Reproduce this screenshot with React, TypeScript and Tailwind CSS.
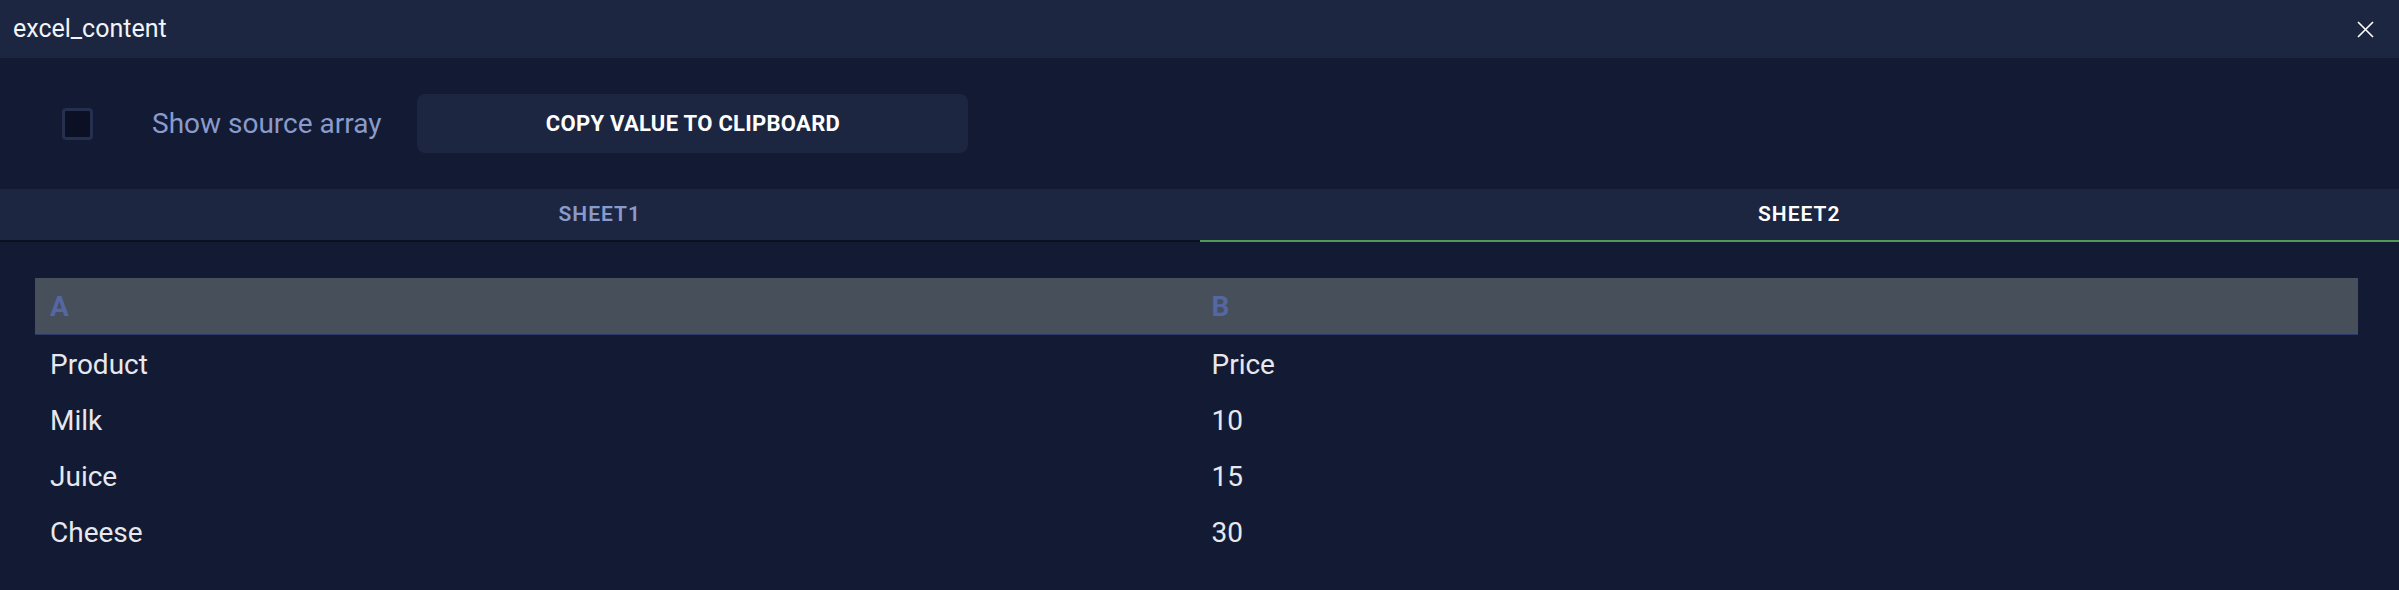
import { useState } from 'react';

const rows = [
  ['Product', 'Price'],
  ['Milk', '10'],
  ['Juice', '15'],
  ['Cheese', '30'],
];

export default function App() {
  const [showSource, setShowSource] = useState(false);
  const [tab, setTab] = useState(1);

  return (
    <div className="w-[2399px] h-[590px] bg-[#131a33] text-white flex flex-col overflow-hidden font-['Roboto','Liberation_Sans',sans-serif]">
      {/* title bar */}
      <div className="h-[58px] shrink-0 bg-[#1c2640] flex items-center justify-between pl-[13px] pr-[24px]">
        <span className="text-[25px] text-[#f2f4f8]">excel_content</span>
        <button className="w-[20px] h-[20px] flex items-center justify-center">
          <svg width="17" height="17" viewBox="0 0 17 17" fill="none" stroke="#ffffff" strokeWidth="1.6">
            <path d="M1 1L16 16M16 1L1 16" />
          </svg>
        </button>
      </div>

      {/* toolbar */}
      <div className="h-[131px] shrink-0 flex items-center pl-[62px]">
        <button
          onClick={() => setShowSource(!showSource)}
          className="w-[31px] h-[32px] rounded-[4px] border-[3px] border-[#25304f] bg-[#0b1025]"
        />
        <span className="ml-[59px] text-[28px] text-[#8a9bcb]">Show source array</span>
        <button className="ml-[36px] w-[551px] h-[59px] rounded-[8px] bg-[#1c2640] text-[22px] font-bold text-white tracking-[0.3px]">
          COPY VALUE TO CLIPBOARD
        </button>
      </div>

      {/* tabs */}
      <div className="h-[53px] shrink-0 grid grid-cols-2 bg-[#1c2640]">
        {['SHEET1', 'SHEET2'].map((name, i) => (
          <button
            key={name}
            onClick={() => setTab(i)}
            className={
              'flex items-center justify-center border-b-2 text-[21px] font-semibold tracking-[1px] ' +
              (tab === i ? 'border-[#4f9a55] text-white' : 'border-[#0b1020] text-[#8a9bcb]')
            }
          >
            {name}
          </button>
        ))}
      </div>

      {/* table */}
      <div className="pt-[36px] px-[35px] pr-[41px]">
        <table className="w-full table-fixed border-collapse">
          <thead>
            <tr className="h-[56px] bg-[#474f5b] border-b border-[#2b3a6a]">
              <th className="text-left pl-[15px] pt-[2px] text-[28px] font-bold text-[#5467a3]">A</th>
              <th className="text-left pl-[15px] pt-[2px] text-[28px] font-bold text-[#5467a3]">B</th>
            </tr>
          </thead>
          <tbody>
            {rows.map((r) => (
              <tr key={r[0]} className="h-[56px]">
                <td className="pl-[15px] pt-[6px] text-[28px] text-[#e6e8ee]">{r[0]}</td>
                <td className="pl-[15px] pt-[6px] text-[28px] text-[#e6e8ee]">{r[1]}</td>
              </tr>
            ))}
          </tbody>
        </table>
      </div>
    </div>
  );
}
